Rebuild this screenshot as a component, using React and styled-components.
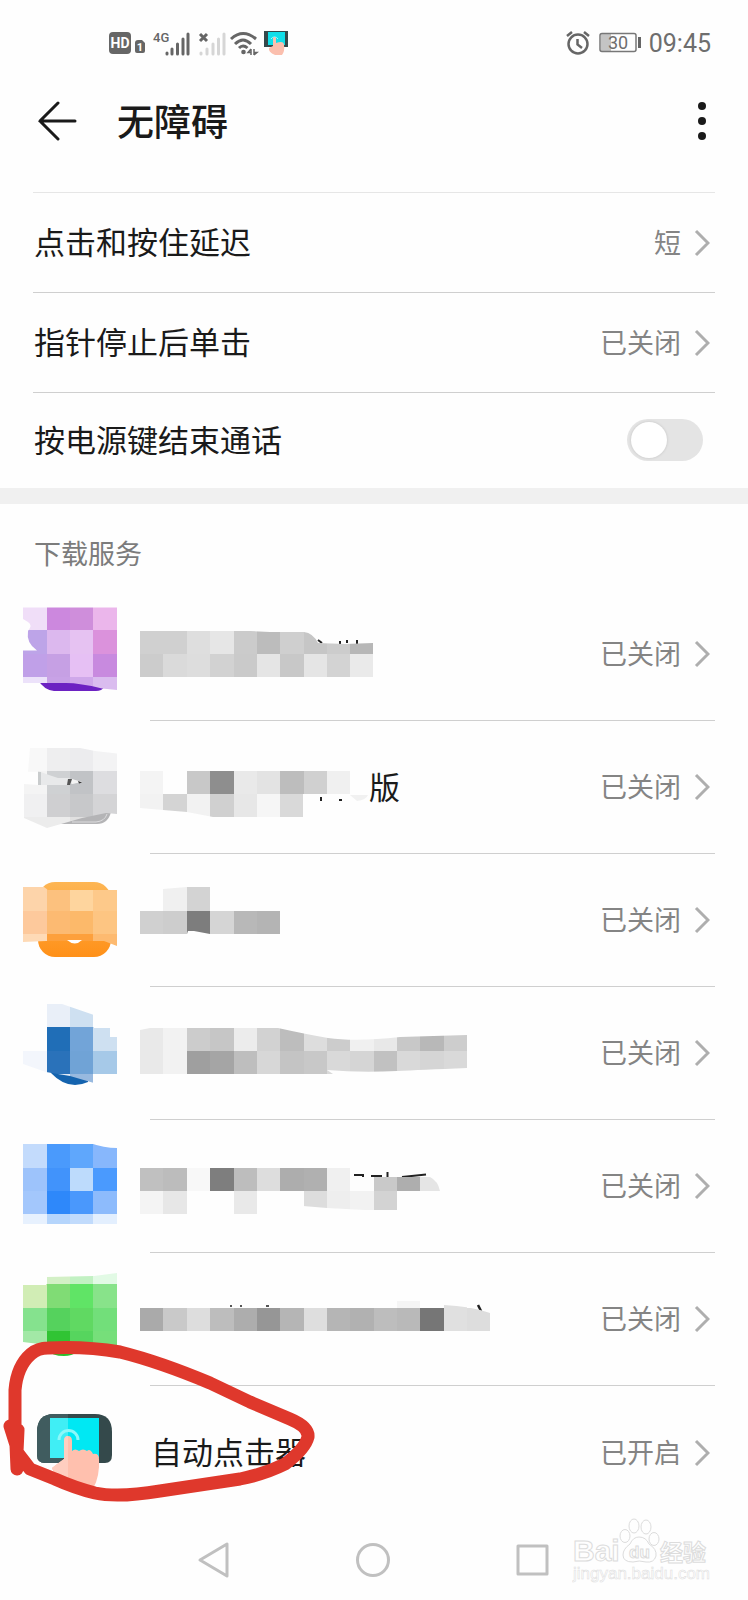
import React from 'react'
import styled, { createGlobalStyle } from 'styled-components'

const GlobalStyle = createGlobalStyle`
  * { box-sizing: border-box; }
  body {
    margin: 0;
    background: #fefefe;
    color: #1a1a1a;
    font-family: Roboto, "Noto Sans CJK SC", sans-serif;
  }
  ul { list-style: none; margin: 0; padding: 0; }
`

const Screen = styled.div`
  display: flex;
  flex-direction: column;
  min-height: 100vh;
  overflow: hidden;
`

const StatusBar = styled.div`
  display: flex;
  align-items: center;
  justify-content: space-between;
  height: 86px;
  padding: 0 37px 0 108px;
  color: #666;
`

const StatusGroup = styled.div`
  display: flex;
  align-items: center;
  gap: ${p => p.$gap}px;
`

const WifiIcon = styled.svg`
  margin-left: -12px;
`

const Time = styled.span`
  padding-top: 2px;
  font-size: 25px;
  line-height: 32px;
  color: #6e6e6e;
`

const Header = styled.header`
  display: flex;
  align-items: center;
  height: 70px;
  margin-bottom: 36px;
  padding: 0 34px 0 36px;
`

const IconButton = styled.button`
  display: flex;
  align-items: center;
  justify-content: center;
  padding: 0;
  border: 0;
  background: none;
  color: #1a1a1a;
  cursor: pointer;
`

const Title = styled.h1`
  flex: 1;
  margin: 0 0 0 39px;
  padding-top: 6px;
  font-size: 37px;
  line-height: 48px;
  font-weight: 500;
`

const SettingRow = styled.li`
  display: flex;
  align-items: center;
  justify-content: space-between;
  height: ${p => (p.$last ? 96 : 100)}px;
  margin: 0 33px;
  border-top: 1px solid ${p => (p.$soft ? '#e6e6e6' : '#cfcfcf')};
`

const RowLink = styled.a`
  display: flex;
  flex: 1;
  align-items: center;
  justify-content: space-between;
  color: inherit;
  text-decoration: none;
`

const Label = styled.span`
  padding: 3px 0 0 1px;
  font-size: 31px;
  line-height: 40px;
`

const Value = styled.span`
  display: flex;
  align-items: center;
  gap: 13px;
  padding-right: 5px;
  font-size: 27px;
  line-height: 36px;
  color: #848484;
`

const ValueText = styled.span`
  padding-top: 2px;
`

const Switch = styled.input`
  appearance: none;
  flex: none;
  width: 76px;
  height: 42px;
  margin: 0 12px 2px 0;
  padding: 3px 4px;
  border-radius: 21px;
  background: #e4e4e4;
  &::before {
    content: '';
    display: block;
    width: 36px;
    height: 36px;
    border-radius: 50%;
    background: #fff;
    box-shadow: 0 0 3px rgba(0, 0, 0, 0.15);
  }
  &:checked { background: #1f7cf0; }
  &:checked::before { margin-left: auto; }
`

const Band = styled.div`
  height: 16px;
  background: #f0f0f0;
`

const SectionTitle = styled.h2`
  display: flex;
  align-items: center;
  height: 84px;
  margin: 0 34px;
  padding-top: 18px;
  font-size: 27px;
  line-height: 36px;
  font-weight: 400;
  color: #7c7c7c;
`

const ServiceRow = styled.li`
  position: relative;
  display: flex;
  height: 133px;
  padding: 0 33px 0 23px;
`

const ServiceIcon = styled.svg`
  flex: none;
  width: 94px;
  height: 132px;
`

const ServiceLink = styled(RowLink)`
  margin-left: 33px;
  border-bottom: ${p => (p.$last ? 0 : 1)}px solid #cfcfcf;
`

const ServiceName = styled.span`
  display: flex;
  align-items: center;
  font-size: 31px;
  line-height: 40px;
`

const NameText = styled.span`
  padding: 3px 0 0 1px;
`

const Censored = styled.svg`
  flex: none;
  width: ${p => p.$w}px;
  height: 132px;
  margin-left: -10px;
`

const Scribble = styled.svg`
  position: absolute;
  left: 0;
  top: -46px;
  width: 320px;
  height: 170px;
  pointer-events: none;
`

const NavBar = styled.nav`
  position: relative;
  display: flex;
  align-items: center;
  justify-content: space-between;
  height: 81px;
  padding: 0 194px 0 192px;
`

const Watermark = styled.div`
  position: absolute;
  right: 34px;
  bottom: 10px;
  width: 142px;
  height: 72px;
`

const T = 23.35

// cells start at column/row (c, r) of the mosaic grid; 0 leaves a hole
const Mosaic = ({ id, clip, c, r, rows }) => (
  <>
    <clipPath id={id}><path d={clip} /></clipPath>
    <g clipPath={`url(#${id})`} shapeRendering="crispEdges">
      {rows.map((row, j) => row.split(' ').map((v, i) => v !== '0' && (
        <rect
          key={`${j}-${i}`}
          x={(c + i) * T}
          y={(r + j) * T}
          width={T}
          height={T}
          fill={`#${v.length === 2 ? v + v + v : v}`}
        />
      )))}
    </g>
  </>
)

const services = [
  {
    icon: (
      <>
        <path d="M38 675H104Q108 691 96 691H54Q44 690 38 680Z" fill="#6c22c2" />
        <Mosaic id="i1" c={1} r={26} clip="M23 607.500H117V690L102 688.500Q80 683 66 683H23V650.500H37Q26 643 28 631Q33 625 28 622L23 619Z"
          rows={['f0def8 cc88de cf8edb ebb6eb', 'bda4e8 dcb8ee e6c2f2 db92dc', 'c0a0e8 c6a0e4 e6c0f4 c88adf', 'ece2fa c8a2e6 cfa8ea dabcef']} />
      </>
    ),
    w: 240,
    name: (
      <>
        <path d="M318 640l4 3M340 641v3M347 640v3M357 640v4" stroke="#222" strokeWidth="2" />
        <Mosaic id="n1" c={6} r={27} clip="M140 631H250L270 632H304Q313 633 318 643L345 644L373 643V677H140Z"
          rows={['d0 d0 de e6 cb bc cf c6 cc b7', 'cc da dd d2 ca e5 c8 e5 d3 ea']} />
      </>
    ),
  },
  {
    icon: (
      <>
        <path d="M60 824L82 812H111Q108 824 97 824Z" fill="#b4b4b6" />
        <path d="M72 822H96Q105 821 107 814" fill="none" stroke="#dcdcde" />
        <Mosaic id="i2" c={1} r={32} clip="M30 748H80L95 751L117 753.500V814L106 813L82 818L47 828L24 818V784L38 785V771.500H28Z"
          rows={['f8f8f8 eeeeef ececee f3f3f4', 'f4f4f4 cfd1d3 c1c3c6 dddde0', 'f0f0f1 cfcfd1 c7c8ca d4d4d6', 'ececec ececec e0e0e0 e0e0e0']} />
        <path d="M38 771L49 775L58 778H68L80 782L66 785H38Z" fill="#e8e9ea" />
        <path d="M38 772h3v13h-3z" fill="#c9cccd" />
        <path d="M68 779h4l-2 6h-3z" fill="#555" />
        <path d="M72 779L82 782L72 784Z" fill="#f4f4f4" />
        <path d="M78 781l4 1.500l-3 1z" fill="#333" />
      </>
    ),
    w: 228,
    name: (
      <>
        <path d="M300 797h2M321 797v4M339 800h3" stroke="#222" strokeWidth="2" />
        <path d="M350 795H368Q366 800 357 801Z" fill="#f1f1f1" />
        <Mosaic id="n2" c={6} r={33} clip="M140 771H351V794H303V817H213L187 812L163 810L140 808Z"
          rows={['f4 0 c8 8e e9 e3 bd d0 f0', 'f2 d4 f2 d0 e7 f6 d9']} />
      </>
    ),
    text: '版',
  },
  {
    icon: (
      <>
        <linearGradient id="orange" x1="0" y1="0" x2="0" y2="1">
          <stop offset="0" stopColor="#fdb654" />
          <stop offset="1" stopColor="#ff9018" />
        </linearGradient>
        <rect x="38" y="882" width="73" height="75" rx="17" fill="url(#orange)" />
        <Mosaic id="i3" c={1} r={38} clip="M23 887H44L48 890H117V946L104 941H46L23 942Z"
          rows={['fdd4aa fcc17e fed59e fdc98a', 'fdc99c fcba72 fcb96a fdc582', 'fedab6 fda03c fda03c fdba70']} />
        <path d="M67 940H82Q75 947 67 940Z" fill="#fff" />
      </>
    ),
    w: 141,
    name: (
      <Mosaic id="n3" c={6} r={38} clip="M140 911H163V889L187 887H211V911H281V934H210L194 931H188L187 934H140Z"
        rows={['0 f0 d3', 'd0 cd 7d d5 b8 b4']} />
    ),
  },
  {
    icon: (
      <>
        <path d="M48 1066H88V1082Q68 1091 51 1073Z" fill="#1463ae" />
        <Mosaic id="i4" c={1} r={43} clip="M46 1004H62L94 1015V1028H110V1037H117V1074H94V1083L70 1076L46 1072L23 1064V1051H46Z"
          rows={['0 e9eff8 cee0f1', '0 206eb7 72a4d8 cee0f1', 'f3f6fc 2a72ba 70a3d6 a6c9e8', '0 e0eaf6 98b9df']} />
      </>
    ),
    w: 327,
    name: (
      <Mosaic id="n4" c={6} r={44} clip="M140 1030L150 1028H278Q305 1034 328 1038Q356 1042 400 1037L467 1035V1068Q420 1070 397 1071Q360 1073 327 1070L333 1074H140Z"
        rows={['e9 f2 cc c6 ec d2 bd dd cc f0 e8 c8 b8 cd', 'e9 f2 9f a5 be d7 c4 c8 d9 d5 c1 d9 d5 d9']} />
    ),
  },
  {
    icon: (
      <Mosaic id="i5" c={1} r={49} clip="M23 1143H90Q104 1148 117 1148V1224H23Z"
        rows={['c3dbfc 4a9afc 5fa7fc 87b7fc', '9dc3fb 4193fb bddbfc 4a9afe', 'a3c7fc 2e88fa 4a98fc 8dbbfc', 'e7f1fe b5d5fc c1dbfc e3effe']} />
    ),
    w: 300,
    name: (
      <>
        <path d="M354 1175H363V1178M372 1178V1176H381V1178M387.500 1172V1179M402 1177L426 1174.500" stroke="#222" strokeWidth="2" fill="none" />
        <Mosaic id="n5" c={6} r={50} clip="M140 1167H350V1177H430Q438 1181 440 1191H397V1210H365L327 1208L303 1206V1191H257V1215L245 1214L233 1215H140Z"
          rows={['c0 bc f8 7e bd dd ad b0 f0 fd c9 ae e5', 'f4 e7 0 0 e9 0 0 dd ee f2 d3']} />
      </>
    ),
  },
  {
    icon: (
      <>
        <path d="M47 1340H84Q80 1356 64 1356Q52 1356 47 1350Z" fill="#28c02c" />
        <Mosaic id="i6" c={1} r={54} clip="M23 1285H46V1277L94 1276L117 1273V1345H47L23 1342Z"
          rows={['0 d3f0c6 c2f1c3 e2fae5', 'd1edb5 80dc75 60e466 88e38a', '85e28e 55d25d 60d962 72df7a', 'a2e8a6 30c434 56d55e 76df7a']} />
      </>
    ),
    w: 350,
    name: (
      <>
        <path d="M230 1306h2M240 1306h2M266 1306h3" stroke="#555" strokeWidth="2" />
        <path d="M478 1305L481 1311" stroke="#222" strokeWidth="2.500" />
        <path d="M397 1301H420V1308H397Z" fill="#f5f5f5" />
        <Mosaic id="n6" c={6} r={55} clip="M140 1308H444V1305Q470 1306 490 1313V1331H140Z"
          rows={['0 0 0 0 0 0 0 0 0 0 0 0 0 e0', 'aa c9 dd bd ad 96 b5 de b5 b1 bd b9 76 e0 dd']} />
      </>
    ),
  },
]

const ClickerArt = () => (
  <>
    <path d="M37 1432Q37 1414 54 1414H95Q112 1414 112 1432V1455Q112 1463 105 1463H45Q37 1463 37 1455Z" fill="#34494b" />
    <path d="M37 1432Q37 1414 54 1414H68V1463H45Q37 1463 37 1455Z" fill="#405c5f" />
    <path d="M50 1418H99V1458H50Z" fill="#00e8f3" />
    <path d="M50 1418H68V1458H50Z" fill="#40eef5" />
    <path d="M59 1440A9.500 9.500 0 0 1 78 1440" fill="none" stroke="#8cf8fa" strokeWidth="3" />
    <path d="M64 1441Q64 1436 68 1436Q72 1436 72 1441V1451Q75 1448 79 1451Q83 1448 87 1451Q90 1448 93 1454Q99 1453 99 1459Q100 1476 93 1489Q73 1488 65 1479Q53 1474 52 1468Q57 1464 64 1459Z" fill="#ffc0ae" />
    <path d="M64 1441Q64 1436 68 1436V1481Q53 1474 52 1468Q57 1464 64 1459Z" fill="#ffcec0" />
  </>
)

const Chevron = () => (
  <svg width="16" height="28" viewBox="0 0 16 28" fill="none" stroke="#aeaeae" strokeWidth="3" aria-hidden="true">
    <path d="M2 2L14 14L2 26" />
  </svg>
)

const Signal = ({ faded }) => (
  <svg width="40" height="28" viewBox="0 0 40 28" strokeLinecap="round" strokeWidth="3" aria-hidden="true">
    <g stroke={faded ? '#d6d6d6' : '#666'}>
      <path d={faded ? 'M5 25V24M11 25V20M17 25V15M22.500 25V10M28 25V5' : 'M16 25V24M21 25V20M26.500 25V15M32 25V10M37 25V5'} />
    </g>
    {faded
      ? <path d="M4 5L11 12M11 5L4 12" stroke="#666" strokeLinecap="butt" />
      : <text x="2" y="13" fontSize="13" fontFamily="Roboto" fontWeight="500" fill="#666">4G</text>}
  </svg>
)

const App = () => {
  return (
    <Screen>
      <GlobalStyle />
      <StatusBar>
        <StatusGroup $gap={5}>
          <svg width="38" height="24" viewBox="0 0 38 24">
            <rect x="1" y="1" width="22" height="22" rx="4" fill="#666" />
            <text x="12" y="17" textAnchor="middle" fontSize="14" fontWeight="700" fontFamily="Roboto" fill="#fff">HD</text>
            <path d="M27 12Q27 9 30 9H34L37 12V20Q37 22 35 22H29Q27 22 27 20Z" fill="#666" />
            <text x="32" y="20" textAnchor="middle" fontSize="11" fontWeight="700" fontFamily="Roboto" fill="#fff">1</text>
          </svg>
          <Signal />
          <Signal faded />
          <WifiIcon width="30" height="26" viewBox="0 0 30 26" fill="none" stroke="#666" strokeWidth="3">
            <path d="M2 9Q14 -2 27 9M6 14Q14 6 22 14M10 18Q14 14 18.500 18" />
            <circle cx="14.500" cy="22" r="2.300" fill="#666" stroke="none" />
            <path d="M22 19V25M22 19L19 22.500H22M25 25V19M25 25L28 22.500H25" strokeWidth="1.500" />
          </WifiIcon>
          <svg width="24" height="28" viewBox="0 0 24 28">
            <path d="M0 2H24V18H0Z" fill="#34494b" />
            <path d="M4 3H21V16H4Z" fill="#10dfe9" />
            <path d="M7 10A4 4 0 0 1 14 10" fill="none" stroke="#9ff" />
            <path d="M9 9Q11 7 12 9V14Q20 11 20 16Q21 22 18 26H11Q4 23 5 19L9 17Z" fill="#fbbfae" />
          </svg>
        </StatusGroup>
        <StatusGroup $gap={7}>
          <svg width="26" height="26" viewBox="0 0 26 26" fill="none" stroke="#666" strokeWidth="2.500">
            <circle cx="13" cy="14" r="9.500" />
            <path d="M12.500 9V14.500L17 18M2 6L7 2M24 6L19 2" />
          </svg>
          <svg width="44" height="22" viewBox="0 0 44 22">
            <rect x="3" y="2" width="10" height="17" fill="#c4c4c4" />
            <rect x="2" y="1.500" width="36" height="18" rx="2" fill="none" stroke="#777" strokeWidth="1.500" />
            <rect x="40" y="5" width="3" height="11" fill="#666" />
            <text x="20" y="17" textAnchor="middle" fontSize="18" fontFamily="Roboto" fill="#6e6e6e">30</text>
          </svg>
          <Time>09:45</Time>
        </StatusGroup>
      </StatusBar>

      <Header>
        <IconButton aria-label="返回">
          <svg width="42" height="40" viewBox="0 0 42 40" fill="none" stroke="currentColor" strokeWidth="3" strokeLinecap="round">
            <path d="M22 2L4 20L22 38M4 20H39" />
          </svg>
        </IconButton>
        <Title>无障碍</Title>
        <IconButton aria-label="更多">
          <svg width="24" height="40" viewBox="0 0 24 40" fill="currentColor">
            <circle cx="12" cy="5" r="4" />
            <circle cx="12" cy="20" r="4" />
            <circle cx="12" cy="35" r="4" />
          </svg>
        </IconButton>
      </Header>

      <ul>
        <SettingRow $soft>
          <RowLink href="#delay">
            <Label>点击和按住延迟</Label>
            <Value><ValueText>短</ValueText><Chevron /></Value>
          </RowLink>
        </SettingRow>
        <SettingRow>
          <RowLink href="#pointer">
            <Label>指针停止后单击</Label>
            <Value><ValueText>已关闭</ValueText><Chevron /></Value>
          </RowLink>
        </SettingRow>
        <SettingRow $last>
          <Label as="label" htmlFor="power">按电源键结束通话</Label>
          <Switch id="power" type="checkbox" role="switch" />
        </SettingRow>
      </ul>

      <Band />
      <SectionTitle>下载服务</SectionTitle>

      <ul>
        {services.map((s, i) => (
          <ServiceRow key={i}>
            <ServiceIcon viewBox={`23 ${588 + i * 133} 94 132`}>{s.icon}</ServiceIcon>
            <ServiceLink href={`#service-${i + 1}`}>
              <ServiceName>
                <Censored $w={s.w} viewBox={`140 ${588 + i * 133} ${s.w} 132`}>{s.name}</Censored>
                {s.text && <NameText>{s.text}</NameText>}
              </ServiceName>
              <Value><ValueText>已关闭</ValueText><Chevron /></Value>
            </ServiceLink>
          </ServiceRow>
        ))}
        <ServiceRow>
          <ServiceIcon viewBox="23 1386 94 132"><ClickerArt /></ServiceIcon>
          <ServiceLink href="#clicker" $last>
            <ServiceName><NameText>自动点击器</NameText></ServiceName>
            <Value><ValueText>已开启</ValueText><Chevron /></Value>
          </ServiceLink>
          <Scribble viewBox="0 1340 320 170" fill="none" stroke="#df382c" strokeWidth="13" strokeLinecap="round" strokeLinejoin="round">
            <path d="M17 1469L16 1445L10 1426L15 1424V1390Q17 1366 31 1354Q38 1348 48 1348Q85 1346 120 1352Q160 1362 210 1383L250 1402L290 1419Q309 1427 308 1437Q305 1449 285 1464Q265 1474 240 1479L160 1491Q118 1498 95 1493Q75 1488 55 1479L30 1469L17 1452L18 1430" />
          </Scribble>
        </ServiceRow>
      </ul>

      <NavBar>
        <IconButton aria-label="后退">
          <svg width="44" height="44" viewBox="0 0 44 44" fill="none" stroke="#c0c0c0" strokeWidth="3" strokeLinejoin="round">
            <path d="M8 22L35 6V38Z" />
          </svg>
        </IconButton>
        <IconButton aria-label="主页">
          <svg width="44" height="44" viewBox="0 0 44 44" fill="none" stroke="#c0c0c0" strokeWidth="3">
            <circle cx="22" cy="22" r="15.500" />
          </svg>
        </IconButton>
        <IconButton aria-label="最近任务">
          <svg width="44" height="44" viewBox="0 0 44 44" fill="none" stroke="#c0c0c0" strokeWidth="3" strokeLinejoin="round">
            <path d="M8 8H37V36H8Z" />
          </svg>
        </IconButton>
        <Watermark>
          <svg width="142" height="72" viewBox="0 0 142 72" fill="#fefefe" stroke="#dcdcdc">
            <g fontFamily="Liberation Sans, Noto Sans CJK SC" fontWeight="700">
              <text x="1" y="43" fontSize="30">Bai</text>
              <ellipse cx="53" cy="18" rx="5" ry="6.500" />
              <ellipse cx="62" cy="8" rx="5" ry="7" />
              <ellipse cx="74" cy="9" rx="5" ry="7" />
              <ellipse cx="82" cy="21" rx="5" ry="6.500" />
              <path d="M67 19Q74 19 77 26Q85 31 84 38Q82 45 74 44Q67 42 61 44Q51 44 51 37Q51 31 58 26Q61 19 67 19Z" />
              <text x="57" y="40" fontSize="17">du</text>
              <text x="88" y="43" fontSize="23">经验</text>
            </g>
            <text x="1" y="61" fontSize="17" fontFamily="Liberation Sans" strokeWidth="0.500">jingyan.baidu.com</text>
          </svg>
        </Watermark>
      </NavBar>
    </Screen>
  )
}

export default App
